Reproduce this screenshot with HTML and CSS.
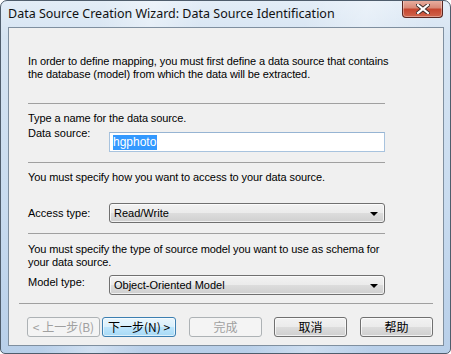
FILE: index.html
```html
<!DOCTYPE html>
<html lang="en">
<head>
  <meta charset="UTF-8" />
  <title>Data Source Creation Wizard</title>
  <link rel="stylesheet" href="styles.css">
</head>
<body>

  <div class="window">
    <div class="titlebar">
      <span class="title">Data Source Creation Wizard: Data Source Identification</span>
      <div class="close-btn">
        <svg width="14" height="10" viewBox="0 0 14 10">
          <path d="M2 1 L12 9 M12 1 L2 9" stroke="#3a2a28" stroke-width="4" stroke-linecap="square" />
          <path d="M2 1 L12 9 M12 1 L2 9" stroke="#ffffff" stroke-width="2.2" stroke-linecap="square" />
        </svg>
      </div>
    </div>

    <div class="client">
      <p class="intro">In order to define mapping, you must first define a data source that contains<br>the database (model) from which the data will be extracted.</p>

      <hr class="sep">

      <p class="hint">Type a name for the data source.</p>
      <div class="row row-top">
        <label class="lbl">Data source:</label>
        <div class="textbox"><span class="sel">hgphoto</span></div>
      </div>

      <hr class="sep sep-a">

      <p class="hint">You must specify how you want to access to your data source.</p>
      <div class="row row-access">
        <label class="lbl">Access type:</label>
        <div class="combo">
          <span>Read/Write</span>
          <span class="arrow"></span>
        </div>
      </div>

      <hr class="sep sep-a">

      <p class="hint hint-model">You must specify the type of source model you want to use as schema for<br>your data source.</p>
      <div class="row row-model">
        <label class="lbl">Model type:</label>
        <div class="combo">
          <span>Object-Oriented Model</span>
          <span class="arrow"></span>
        </div>
      </div>

      <hr class="sep sep-wide">

      <div class="buttons">
        <button class="btn disabled btn-back">&lt; 上一步(B)</button>
        <button class="btn default btn-next">下一步(N) &gt;</button>
        <button class="btn disabled btn-finish">完成</button>
        <button class="btn btn-cancel">取消</button>
        <button class="btn btn-help">帮助</button>
      </div>
    </div>
  </div>

</body>
</html>
```

FILE: styles.css
```css
/* Estilos gerais */
* {
  box-sizing: border-box;
}

html, body {
  margin: 0;
  padding: 0;
  width: 451px;
  height: 354px;
  overflow: hidden;
  background: #fff;
}

body {
  font-family: "Liberation Sans", Arial, sans-serif;
  font-size: 11px;
  color: #000;
}

/* Moldura da janela (Aero) */
.window {
  width: 451px;
  height: 354px;
  border: 1px solid #4f5d6c;
  border-radius: 7px 7px 5px 5px;
  background:
    linear-gradient(100deg, rgba(255,255,255,0) 20%, rgba(255,255,255,0.35) 30%, rgba(255,255,255,0) 40%, rgba(255,255,255,0) 60%, rgba(255,255,255,0.3) 72%, rgba(255,255,255,0) 85%),
    linear-gradient(to bottom, #e3edf7 0%, #d6e4f2 10%, #c8dbef 60%, #b8cfe9 100%);
  overflow: hidden;
}

.titlebar {
  height: 26px;
  display: flex;
  justify-content: space-between;
  align-items: flex-start;
}

.title {
  font-family: "Noto Sans", "Liberation Sans", sans-serif;
  font-size: 12.5px;
  line-height: 16px;
  margin: 5px 0 0 7px;
  color: #111;
}

.close-btn {
  width: 41px;
  height: 18px;
  margin: -1px 7px 0 0;
  border: 1px solid #5a2620;
  border-top: none;
  border-radius: 0 0 4px 4px;
  background: linear-gradient(to bottom, #eab2a4 0%, #d98a78 45%, #c6462f 55%, #d0654c 100%);
  box-shadow: inset 0 0 0 1px rgba(255,255,255,0.35);
  display: flex;
  align-items: center;
  justify-content: center;
}

/* Área cliente */
.client {
  width: 436px;
  height: 319px;
  margin-left: 7px;
  border: 1px solid #7f8f9f;
  background: #f0f0f0;
  padding: 27px 0 8px 0;
}

p {
  margin: 0;
  line-height: 13px;
  white-space: nowrap;
}

.intro, .hint {
  margin-left: 19px;
  letter-spacing: -0.1px;
}

.sep {
  margin: 22px 0 0 19px;
  width: 357px;
  height: 1px;
  border: none;
  background: #a0a0a0;
}

.sep-a {
  margin-top: 10px;
}

.sep-wide {
  margin: 8px 0 0 10px;
  width: 414px;
}

.hint {
  margin-top: 8px;
}

.hint-model {
  margin-top: 9px;
}

/* Linhas do formulário */
.row {
  display: flex;
  margin-left: 19px;
  width: 357px;
}

.lbl {
  width: 81px;
  flex: none;
  line-height: 13px;
}

.row-top {
  margin-top: 2px;
  align-items: flex-start;
}

.row-access {
  margin-top: 19px;
  align-items: center;
}

.row-model {
  margin-top: 6px;
  align-items: center;
}

.row-model .lbl {
  margin-top: -5px;
}

.textbox {
  flex: 1;
  height: 20px;
  margin-top: 5px;
  border: 1px solid #a8c3de;
  border-top-color: #96b4d3;
  background: #fff;
  padding: 2px 0 0 3px;
  font-size: 12px;
  line-height: 14px;
}

.sel {
  background: #3399ff;
  color: #fff;
  padding: 0 1px 1px 0;
}

.combo {
  flex: 1;
  height: 20px;
  border: 1px solid #707070;
  border-radius: 3px;
  background: linear-gradient(to bottom, #f2f2f2 0%, #ebebeb 49%, #dddddd 50%, #cfcfcf 100%);
  box-shadow: inset 0 0 0 1px rgba(255,255,255,0.7);
  display: flex;
  align-items: center;
  justify-content: space-between;
  padding: 0 6px 0 4px;
  font-size: 11px;
}

.arrow {
  width: 0;
  height: 0;
  border-left: 4px solid transparent;
  border-right: 4px solid transparent;
  border-top: 4px solid #000;
  margin-top: 1px;
}

/* Botões */
.buttons {
  display: flex;
  margin-top: 13px;
  padding-left: 18px;
}

.btn {
  width: 73px;
  height: 20px;
  padding: 0;
  border: 1px solid #707070;
  border-radius: 3px;
  background: linear-gradient(to bottom, #f2f2f2 0%, #ebebeb 49%, #dddddd 50%, #cfcfcf 100%);
  box-shadow: inset 0 0 0 1px rgba(255,255,255,0.7);
  font-family: "Noto Sans CJK SC", "Liberation Sans", sans-serif;
  font-size: 12px;
  line-height: 16px;
  color: #000;
}

.btn.disabled {
  border-color: #adb2b5;
  background: #f4f4f4;
  box-shadow: none;
  color: #a0a0a0;
}

.btn.default {
  border-color: #3c7fb1;
  background: linear-gradient(to bottom, #eaf6fd 0%, #d9f0fc 49%, #bee6fd 50%, #a7d9f5 100%);
  box-shadow: inset 0 0 0 1px rgba(255,255,255,0.6);
}

.btn-next {
  width: 74px;
  margin-left: 2px;
}

.btn-finish {
  margin-left: 13px;
}

.btn-cancel {
  margin-left: 12px;
}

.btn-help {
  margin-left: 13px;
}
```
